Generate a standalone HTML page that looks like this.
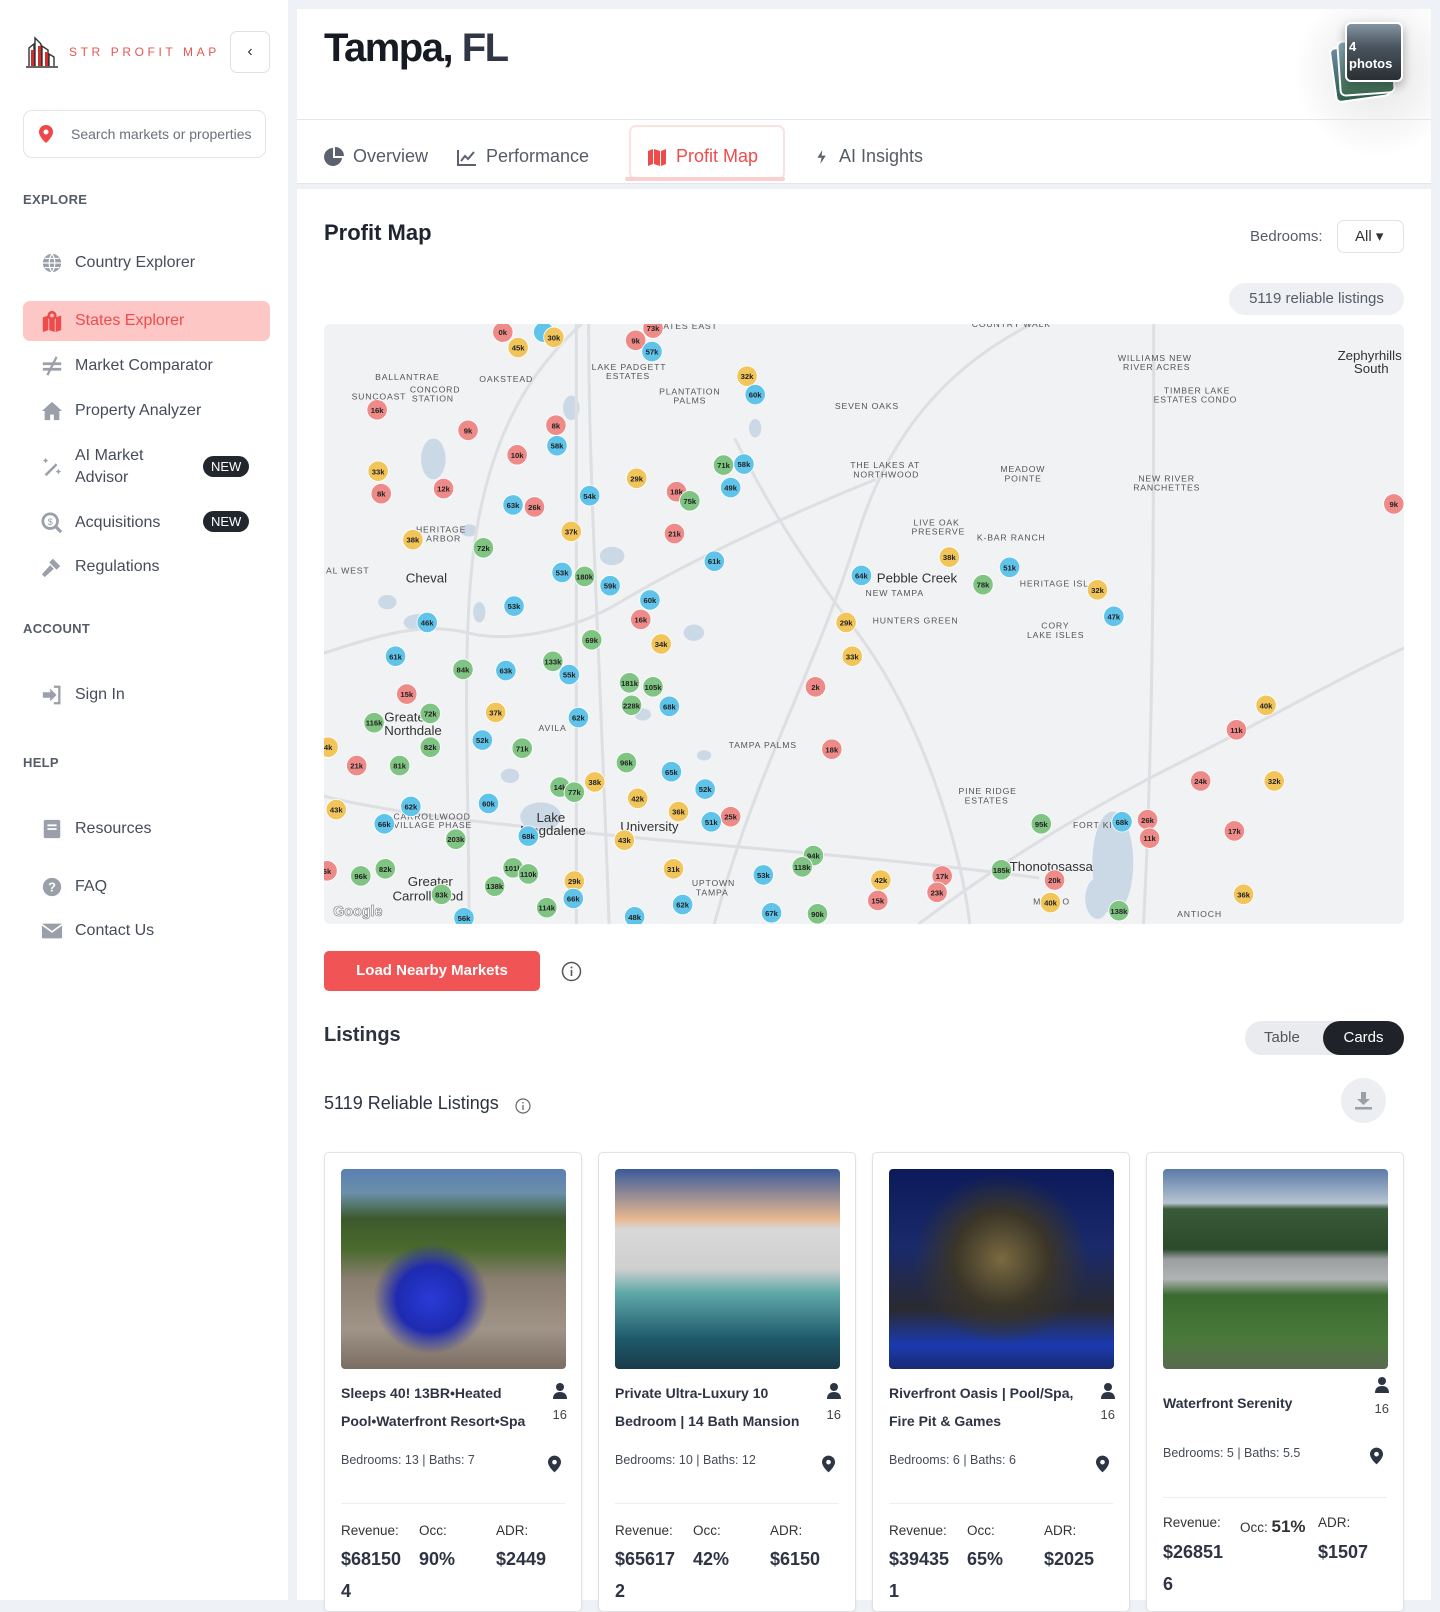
<!DOCTYPE html>
<html><head><meta charset="utf-8"><style>
*{box-sizing:border-box;margin:0;padding:0}
body{width:1440px;height:1600px;overflow:hidden;background:#eef1f5;font-family:"Liberation Sans",sans-serif;color:#2b3240;position:relative}
.abs{position:absolute}
#side{left:0;top:0;width:288px;height:1600px;background:#fff}
.nav{position:absolute;left:41px;font-size:16px;color:#454c5a;display:flex;align-items:center}
.nav svg{width:22px;height:22px;margin-right:12px;fill:#9aa0aa}
.sec{position:absolute;left:23px;font-size:13px;font-weight:bold;color:#555c68;letter-spacing:.3px}
.new{position:absolute;left:203px;background:#22262d;color:#fff;font-size:13px;border-radius:11px;padding:3px 8px}
#main{left:297px;top:9px;width:1134px;height:1591px;background:#fff}
.tab{position:absolute;top:137px;font-size:18px;color:#555c68;display:flex;align-items:center}
.tab svg{width:20px;height:20px;fill:#5b626e;margin-right:9px}
.card{position:absolute;top:1152px;width:258px;height:460px;border:1px solid #dfe2e6;border-radius:5px;background:#fff;box-shadow:0 1px 3px rgba(0,0,0,.06)}
.card .img{position:absolute;left:16px;top:16px;width:225px;height:200px;border-radius:4px;overflow:hidden}
.card .t{position:absolute;left:16px;top:226px;width:190px;font-size:14px;font-weight:bold;line-height:28px;color:#2d3443}
.card .p{position:absolute;right:14px;top:230px;font-size:13px;color:#444;text-align:center;line-height:20px}
.card .b{position:absolute;left:16px;top:300px;font-size:12.5px;color:#444b57}
.card .pin{position:absolute;right:20px;top:302px}
.card hr{position:absolute;left:16px;right:16px;top:350px;border:0;border-top:1px solid #eceef0}
.card .l{position:absolute;top:370px;font-size:13.5px;color:#333}
.card .v{position:absolute;top:396px;font-size:18px;font-weight:bold;color:#2d3443}
.m .mk text{font-size:7.5px;font-weight:bold;fill:#222;text-anchor:middle;font-family:"Liberation Sans",sans-serif}
.r{fill:#ee8b89}.y{fill:#f2c55b}.bl{fill:#5fc3ea}.g{fill:#80c483}
.m circle{stroke:#fff;stroke-width:.8}
.m .lb{font-size:8.5px;fill:#555;letter-spacing:.8px;font-family:"Liberation Sans",sans-serif}
.m .lbb{font-size:13px;fill:#333;font-family:"Liberation Sans",sans-serif}
</style></head><body>
<div id="side" class="abs">
 <svg class="abs" style="left:24px;top:34px" width="36" height="34" viewBox="0 0 36 34"><path d="M2 33h32" stroke="#333" stroke-width="1.5"/><path d="M5 32V14l5-4v22M11 32V4l6 6v22M18 32V12l6 4v16M25 32V20l5 3v9" fill="none" stroke="#333" stroke-width="1.4"/><rect x="7" y="16" width="3" height="16" fill="#d52b2b"/><rect x="14" y="12" width="3" height="20" fill="#d52b2b"/><rect x="21" y="18" width="3" height="14" fill="#d52b2b"/></svg>
 <div class="abs" style="left:69px;top:45px;font-size:12px;letter-spacing:3.6px;color:#e6574f">STR PROFIT MAP</div>
 <div class="abs" style="left:230px;top:31px;width:40px;height:42px;border:1px solid #dde0e4;border-radius:7px;text-align:center;line-height:40px;color:#333;font-size:16px">&#8249;</div>
 <div class="abs" style="left:23px;top:110px;width:243px;height:48px;border:1px solid #e2e5e9;border-radius:9px"></div>
 <svg class="abs" style="left:39px;top:125px" width="14" height="18" viewBox="0 0 14 18"><path d="M7 0a7 7 0 0 1 7 7c0 5-7 11-7 11S0 12 0 7a7 7 0 0 1 7-7z" fill="#f0474a"/><circle cx="7" cy="7" r="2.5" fill="#fff"/></svg>
 <div class="abs" style="left:71px;top:126px;font-size:14px;color:#6a707a;width:186px;overflow:hidden;white-space:nowrap">Search markets or properties</div>
 <div class="sec" style="top:192px">EXPLORE</div>
 <div class="nav" style="top:252px"><svg viewBox="0 0 24 24"><circle cx="12" cy="12" r="10"/><path d="M2 12h20M12 2c-4 5-4 15 0 20M12 2c4 5 4 15 0 20M4 7h16M4 17h16" stroke="#fff" stroke-width="1.3" fill="none"/></svg>Country Explorer</div>
 <div class="abs" style="left:23px;top:301px;width:247px;height:40px;background:#fdc7c6;border-radius:7px"></div>
 <div class="nav" style="top:310px;color:#ee4c4c"><svg viewBox="0 0 24 24" style="fill:#ee4c4c"><path d="M2 8l6-2v16l-6 2zM16 8l6-2v16l-6 2zM9 6l6 2v16l-6-2z"/><circle cx="12" cy="6" r="5" fill="#ee4c4c"/><circle cx="12" cy="6" r="2" fill="#fdc7c6"/></svg>States Explorer</div>
 <div class="nav" style="top:355px"><svg viewBox="0 0 24 24"><path d="M2 8h20v3H2zM2 14h20v3H2z"/><path d="M17 2L7 22" stroke="#9aa0aa" stroke-width="2.5"/></svg>Market Comparator</div>
 <div class="nav" style="top:400px"><svg viewBox="0 0 24 24"><path d="M12 2L1 12h3v10h6v-6h4v6h6V12h3z"/></svg>Property Analyzer</div>
 <div class="nav" style="top:445px;line-height:22px"><svg viewBox="0 0 24 24"><path d="M4 20l12-12 2 2L6 22z"/><path d="M5 2l1 2 2 1-2 1-1 2-1-2-2-1 2-1zM19 14l1 2 2 1-2 1-1 2-1-2-2-1 2-1z"/></svg><span>AI Market<br>Advisor</span></div>
 <div class="new" style="top:456px">NEW</div>
 <div class="nav" style="top:512px"><svg viewBox="0 0 24 24"><circle cx="10" cy="10" r="8" fill="none" stroke="#9aa0aa" stroke-width="3"/><path d="M15 15l7 7" stroke="#9aa0aa" stroke-width="3.5"/><text x="10" y="14" font-size="10" text-anchor="middle" fill="#9aa0aa">$</text></svg>Acquisitions</div>
 <div class="new" style="top:511px">NEW</div>
 <div class="nav" style="top:556px"><svg viewBox="0 0 24 24"><path d="M13 3l8 8-4 4-8-8zM10 10l4 4-10 9-3-3z"/></svg>Regulations</div>
 <div class="sec" style="top:621px">ACCOUNT</div>
 <div class="nav" style="top:684px"><svg viewBox="0 0 24 24"><path d="M2 9h8V5l7 7-7 7v-4H2z"/><path d="M14 3h6v18h-6" fill="none" stroke="#9aa0aa" stroke-width="2.5"/></svg>Sign In</div>
 <div class="sec" style="top:755px">HELP</div>
 <div class="nav" style="top:818px"><svg viewBox="0 0 24 24"><rect x="3" y="2" width="18" height="20" rx="2"/><path d="M7 8h10M7 12h10" stroke="#fff" stroke-width="2"/></svg>Resources</div>
 <div class="nav" style="top:876px"><svg viewBox="0 0 24 24"><circle cx="12" cy="12" r="10"/><text x="12" y="17" font-size="14" font-weight="bold" text-anchor="middle" fill="#fff">?</text></svg>FAQ</div>
 <div class="nav" style="top:920px"><svg viewBox="0 0 24 24"><rect x="1" y="4" width="22" height="16" rx="1"/><path d="M1 5l11 8 11-8" stroke="#fff" stroke-width="1.8" fill="none"/></svg>Contact Us</div>
</div>

<div id="main" class="abs">
 <div class="abs" style="left:27px;top:17px;font-size:40px;font-weight:bold;letter-spacing:-1.5px;color:#151a23">Tampa, <span style="color:#2f3744">FL</span></div>
 <div class="abs" style="left:1000px;top:0;width:134px;height:180px;background:radial-gradient(circle at 60% 35%,rgba(0,0,0,.1),rgba(0,0,0,0) 60%)"></div>
 <div class="abs" style="left:1035px;top:35px;width:56px;height:56px;border:2px solid #fff;border-radius:6px;background:linear-gradient(#6a8aa0,#2f5d4e);transform:rotate(-8deg)"></div>
 <div class="abs" style="left:1041px;top:30px;width:56px;height:56px;border:2px solid #fff;border-radius:6px;background:linear-gradient(#89a9b6,#3e6c52);transform:rotate(-4deg)"></div>
 <div class="abs" style="left:1048px;top:13px;width:58px;height:60px;border:2px solid #fff;border-radius:6px;background:linear-gradient(#8494a0,#4a5560 40%,#2a2f33);color:#fff;font-size:13px;font-weight:bold;padding:14px 0 0 2px;line-height:17px;box-shadow:0 4px 10px rgba(0,0,0,.3)">4<br>photos</div>
 <div class="abs" style="left:0;top:110px;width:1134px;border-top:1px solid #e3e6ea"></div>
 <div class="tab" style="left:27px"><svg viewBox="0 0 20 20"><path d="M9 1a9 9 0 1 0 9 10H9z"/><path d="M11 0v9h9a9 9 0 0 0-9-9z"/></svg>Overview</div>
 <div class="tab" style="left:160px"><svg viewBox="0 0 20 20"><path d="M1 3v15h18" fill="none" stroke="#5b626e" stroke-width="2"/><path d="M4 14l4-5 3 3 6-7" fill="none" stroke="#5b626e" stroke-width="2"/></svg>Performance</div>
 <div class="abs" style="left:332px;top:116px;width:156px;height:55px;border:2px solid #fde1e0;border-radius:7px"></div>
 <div class="abs" style="left:328px;top:168px;width:160px;height:4px;background:#fbcfcd;border-radius:2px"></div>
 <div class="tab" style="left:350px;color:#ef4b4b"><svg viewBox="0 0 20 20" style="fill:#ef4b4b"><path d="M1 4l5-2v15l-5 2zM14 4l5-2v15l-5 2zM7 2l6 2v15l-6-2z"/></svg>Profit Map</div>
 <div class="tab" style="left:519px"><svg viewBox="0 0 20 20" style="width:14px"><path d="M9 0L2 11h6l-2 9 8-12H8z"/></svg>AI Insights</div>
 <div class="abs" style="left:0;top:174px;width:1134px;height:6px;background:#eef1f5;border-top:1px solid #e3e6ea"></div>
 <div class="abs" style="left:27px;top:211px;font-size:22px;font-weight:bold;color:#1f2530">Profit Map</div>
 <div class="abs" style="left:953px;top:219px;font-size:15px;color:#555c68">Bedrooms:</div>
 <div class="abs" style="left:1040px;top:211px;width:67px;height:33px;border:1px solid #dfe2e6;border-radius:7px;font-size:15px;line-height:31px;padding-left:17px;color:#333">All &#9662;</div>
 <div class="abs" style="left:932px;top:274px;width:175px;height:32px;background:#eef0f3;border-radius:16px;font-size:15px;line-height:32px;text-align:center;color:#555c68">5119 reliable listings</div>
</div>

<svg class="abs m" style="left:324px;top:324px;border-radius:6px" width="1080" height="600" viewBox="318 318 1057 587" preserveAspectRatio="none">
<rect x="318" y="318" width="1057" height="587" fill="#f1f2f4"/>
<g fill="#cbd8e6">
<ellipse cx="425" cy="450" rx="12" ry="20"/><ellipse cx="410" cy="610" rx="14" ry="8"/><ellipse cx="600" cy="545" rx="12" ry="9"/><ellipse cx="560" cy="400" rx="8" ry="12"/><ellipse cx="680" cy="620" rx="10" ry="8"/><ellipse cx="470" cy="600" rx="6" ry="10"/><ellipse cx="530" cy="800" rx="20" ry="14"/><ellipse cx="1090" cy="845" rx="20" ry="50"/><ellipse cx="1075" cy="880" rx="12" ry="20"/><ellipse cx="500" cy="760" rx="9" ry="7"/><ellipse cx="630" cy="700" rx="8" ry="6"/><ellipse cx="740" cy="420" rx="6" ry="9"/><ellipse cx="460" cy="520" rx="8" ry="6"/><ellipse cx="380" cy="590" rx="9" ry="7"/><ellipse cx="690" cy="740" rx="7" ry="5"/><ellipse cx="560" cy="860" rx="7" ry="5"/>
</g>
<g fill="none" stroke="#dedfe2" stroke-width="3">
<path d="M565 318V905"/><path d="M577 318c0 150 10 300 20 587"/><path d="M318 640c60-20 100-30 140-20s100 0 150-30 150-80 250-120"/><path d="M460 905c0-150-10-300 10-400s60-150 100-187"/><path d="M700 905c40-150 100-250 140-380s120-180 170-207"/><path d="M720 430c30 60 60 110 120 190s100 200 110 285"/><path d="M318 780c80 20 200 30 300 40s250 20 400 40"/><path d="M900 905c80-60 160-110 260-160s150-80 215-110"/><path d="M1130 318c0 200 0 400-10 587"/>
</g>
<text class="lb" x="368" y="373">BALLANTRAE</text><text class="lb" x="470" y="375">OAKSTEAD</text><text class="lb" x="345" y="392">SUNCOAST</text><text class="lb" x="402" y="385">CONCORD</text><text class="lb" x="404" y="394">STATION</text><text class="lb" x="580" y="363">LAKE PADGETT</text><text class="lb" x="594" y="372">ESTATES</text><text class="lb" x="646" y="387">PLANTATION</text><text class="lb" x="660" y="396">PALMS</text><text class="lb" x="818" y="401">SEVEN OAKS</text><text class="lb" x="650" y="323">ATES EAST</text><text class="lb" x="952" y="321">COUNTRY WALK</text><text class="lb" x="1095" y="354">WILLIAMS NEW</text><text class="lb" x="1100" y="363">RIVER ACRES</text><text class="lb" x="1140" y="386">TIMBER LAKE</text><text class="lb" x="1130" y="395">ESTATES CONDO</text><text class="lbb" x="1310" y="353">Zephyrhills</text><text class="lbb" x="1326" y="366">South</text><text class="lb" x="833" y="459">THE LAKES AT</text><text class="lb" x="836" y="468">NORTHWOOD</text><text class="lb" x="980" y="463">MEADOW</text><text class="lb" x="984" y="472">POINTE</text><text class="lb" x="1115" y="472">NEW RIVER</text><text class="lb" x="1110" y="481">RANCHETTES</text><text class="lb" x="895" y="515">LIVE OAK</text><text class="lb" x="893" y="524">PRESERVE</text><text class="lb" x="957" y="530">K-BAR RANCH</text><text class="lb" x="999" y="575">HERITAGE ISL</text><text class="lbb" x="859" y="571">Pebble Creek</text><text class="lb" x="848" y="584">NEW TAMPA</text><text class="lb" x="855" y="611">HUNTERS GREEN</text><text class="lb" x="1020" y="616">CORY</text><text class="lb" x="1006" y="625">LAKE ISLES</text><text class="lbb" x="398" y="571">Cheval</text><text class="lb" x="320" y="562">AL WEST</text><text class="lb" x="408" y="522">HERITAGE</text><text class="lb" x="418" y="531">ARBOR</text><text class="lbb" x="377" y="707">Greater</text><text class="lbb" x="377" y="720">Northdale</text><text class="lb" x="528" y="716">AVILA</text><text class="lb" x="714" y="733">TAMPA PALMS</text><text class="lbb" x="526" y="805">Lake</text><text class="lbb" x="510" y="818">Magdalene</text><text class="lbb" x="608" y="814">University</text><text class="lb" x="939" y="778">PINE RIDGE</text><text class="lb" x="945" y="787">ESTATES</text><text class="lb" x="1051" y="811">FORT KI</text><text class="lbb" x="989" y="853">Thonotosassa</text><text class="lbb" x="400" y="868">Greater</text><text class="lbb" x="385" y="882">Carrollwood</text><text class="lb" x="678" y="868">UPTOWN</text><text class="lb" x="682" y="877">TAMPA</text><text class="lb" x="1153" y="898">ANTIOCH</text><text class="lb" x="1012" y="886">MANGO</text><text class="lb" x="386" y="803">CARROLLWOOD</text><text class="lb" x="386" y="811">VILLAGE PHASE</text>
<text x="327" y="897" style="font-size:14px;font-weight:bold;fill:#fff;stroke:#777;stroke-width:.6;font-family:'Liberation Sans',sans-serif">Google</text>
<g class="mk">
<circle class="r" cx="493" cy="326" r="10"/><text x="493" y="329">0k</text>
<circle class="bl" cx="533" cy="326" r="10"/>
<circle class="y" cx="508" cy="341" r="10"/><text x="508" y="344">45k</text>
<circle class="y" cx="543" cy="331" r="10"/><text x="543" y="334">30k</text>
<circle class="r" cx="640" cy="322" r="10"/><text x="640" y="325">73k</text>
<circle class="r" cx="623" cy="334" r="10"/><text x="623" y="337">9k</text>
<circle class="bl" cx="639" cy="345" r="10"/><text x="639" y="348">57k</text>
<circle class="y" cx="732" cy="369" r="10"/><text x="732" y="372">32k</text>
<circle class="bl" cx="740" cy="387" r="10"/><text x="740" y="390">60k</text>
<circle class="r" cx="370" cy="402" r="10"/><text x="370" y="405">16k</text>
<circle class="r" cx="459" cy="422" r="10"/><text x="459" y="425">9k</text>
<circle class="r" cx="545" cy="417" r="10"/><text x="545" y="420">8k</text>
<circle class="bl" cx="546" cy="437" r="10"/><text x="546" y="440">58k</text>
<circle class="r" cx="507" cy="446" r="10"/><text x="507" y="449">10k</text>
<circle class="y" cx="371" cy="462" r="10"/><text x="371" y="465">33k</text>
<circle class="r" cx="374" cy="484" r="10"/><text x="374" y="487">8k</text>
<circle class="r" cx="435" cy="479" r="10"/><text x="435" y="482">12k</text>
<circle class="y" cx="624" cy="469" r="10"/><text x="624" y="472">29k</text>
<circle class="g" cx="709" cy="456" r="10"/><text x="709" y="459">71k</text>
<circle class="bl" cx="729" cy="455" r="10"/><text x="729" y="458">58k</text>
<circle class="bl" cx="716" cy="478" r="10"/><text x="716" y="481">49k</text>
<circle class="r" cx="663" cy="482" r="10"/><text x="663" y="485">18k</text>
<circle class="g" cx="676" cy="491" r="10"/><text x="676" y="494">75k</text>
<circle class="bl" cx="503" cy="495" r="10"/><text x="503" y="498">63k</text>
<circle class="r" cx="524" cy="497" r="10"/><text x="524" y="500">26k</text>
<circle class="bl" cx="578" cy="486" r="10"/><text x="578" y="489">54k</text>
<circle class="y" cx="405" cy="529" r="10"/><text x="405" y="532">38k</text>
<circle class="g" cx="474" cy="537" r="10"/><text x="474" y="540">72k</text>
<circle class="y" cx="560" cy="521" r="10"/><text x="560" y="524">37k</text>
<circle class="r" cx="661" cy="523" r="10"/><text x="661" y="526">21k</text>
<circle class="bl" cx="700" cy="550" r="10"/><text x="700" y="553">61k</text>
<circle class="bl" cx="551" cy="561" r="10"/><text x="551" y="564">53k</text>
<circle class="g" cx="573" cy="565" r="10"/><text x="573" y="568">180k</text>
<circle class="bl" cx="598" cy="574" r="10"/><text x="598" y="577">59k</text>
<circle class="bl" cx="504" cy="594" r="10"/><text x="504" y="597">53k</text>
<circle class="bl" cx="637" cy="588" r="10"/><text x="637" y="591">60k</text>
<circle class="r" cx="628" cy="607" r="10"/><text x="628" y="610">16k</text>
<circle class="bl" cx="419" cy="610" r="10"/><text x="419" y="613">46k</text>
<circle class="g" cx="580" cy="627" r="10"/><text x="580" y="630">69k</text>
<circle class="y" cx="648" cy="631" r="10"/><text x="648" y="634">34k</text>
<circle class="bl" cx="388" cy="643" r="10"/><text x="388" y="646">61k</text>
<circle class="g" cx="454" cy="656" r="10"/><text x="454" y="659">84k</text>
<circle class="bl" cx="496" cy="657" r="10"/><text x="496" y="660">63k</text>
<circle class="g" cx="542" cy="648" r="10"/><text x="542" y="651">133k</text>
<circle class="bl" cx="558" cy="661" r="10"/><text x="558" y="664">55k</text>
<circle class="g" cx="617" cy="669" r="10"/><text x="617" y="672">181k</text>
<circle class="g" cx="640" cy="673" r="10"/><text x="640" y="676">105k</text>
<circle class="g" cx="619" cy="691" r="10"/><text x="619" y="694">228k</text>
<circle class="bl" cx="656" cy="692" r="10"/><text x="656" y="695">68k</text>
<circle class="r" cx="399" cy="680" r="10"/><text x="399" y="683">15k</text>
<circle class="y" cx="486" cy="698" r="10"/><text x="486" y="701">37k</text>
<circle class="g" cx="422" cy="699" r="10"/><text x="422" y="702">72k</text>
<circle class="g" cx="367" cy="708" r="10"/><text x="367" y="711">116k</text>
<circle class="bl" cx="567" cy="703" r="10"/><text x="567" y="706">62k</text>
<circle class="bl" cx="473" cy="725" r="10"/><text x="473" y="728">52k</text>
<circle class="g" cx="422" cy="732" r="10"/><text x="422" y="735">82k</text>
<circle class="g" cx="512" cy="733" r="10"/><text x="512" y="736">71k</text>
<circle class="y" cx="322" cy="732" r="10"/><text x="322" y="735">4k</text>
<circle class="r" cx="350" cy="750" r="10"/><text x="350" y="753">21k</text>
<circle class="g" cx="392" cy="750" r="10"/><text x="392" y="753">81k</text>
<circle class="g" cx="614" cy="747" r="10"/><text x="614" y="750">96k</text>
<circle class="bl" cx="658" cy="756" r="10"/><text x="658" y="759">65k</text>
<circle class="g" cx="549" cy="771" r="10"/><text x="549" y="774">14k</text>
<circle class="y" cx="583" cy="766" r="10"/><text x="583" y="769">38k</text>
<circle class="g" cx="563" cy="776" r="10"/><text x="563" y="779">77k</text>
<circle class="bl" cx="691" cy="773" r="10"/><text x="691" y="776">52k</text>
<circle class="y" cx="625" cy="782" r="10"/><text x="625" y="785">42k</text>
<circle class="y" cx="330" cy="793" r="10"/><text x="330" y="796">43k</text>
<circle class="bl" cx="403" cy="790" r="10"/><text x="403" y="793">62k</text>
<circle class="bl" cx="479" cy="787" r="10"/><text x="479" y="790">60k</text>
<circle class="y" cx="665" cy="795" r="10"/><text x="665" y="798">36k</text>
<circle class="r" cx="716" cy="800" r="10"/><text x="716" y="803">25k</text>
<circle class="bl" cx="697" cy="805" r="10"/><text x="697" y="808">51k</text>
<circle class="bl" cx="377" cy="807" r="10"/><text x="377" y="810">66k</text>
<circle class="g" cx="447" cy="822" r="10"/><text x="447" y="825">203k</text>
<circle class="bl" cx="518" cy="819" r="10"/><text x="518" y="822">68k</text>
<circle class="y" cx="612" cy="823" r="10"/><text x="612" y="826">43k</text>
<circle class="g" cx="797" cy="838" r="10"/><text x="797" y="841">94k</text>
<circle class="g" cx="786" cy="849" r="10"/><text x="786" y="852">118k</text>
<circle class="g" cx="503" cy="850" r="10"/><text x="503" y="853">101k</text>
<circle class="g" cx="518" cy="856" r="10"/><text x="518" y="859">110k</text>
<circle class="g" cx="378" cy="851" r="10"/><text x="378" y="854">82k</text>
<circle class="g" cx="354" cy="858" r="10"/><text x="354" y="861">96k</text>
<circle class="r" cx="321" cy="853" r="10"/><text x="321" y="856">6k</text>
<circle class="y" cx="660" cy="851" r="10"/><text x="660" y="854">31k</text>
<circle class="bl" cx="748" cy="857" r="10"/><text x="748" y="860">53k</text>
<circle class="y" cx="563" cy="863" r="10"/><text x="563" y="866">29k</text>
<circle class="g" cx="485" cy="868" r="10"/><text x="485" y="871">138k</text>
<circle class="g" cx="433" cy="876" r="10"/><text x="433" y="879">83k</text>
<circle class="bl" cx="562" cy="880" r="10"/><text x="562" y="883">66k</text>
<circle class="bl" cx="669" cy="886" r="10"/><text x="669" y="889">62k</text>
<circle class="g" cx="536" cy="889" r="10"/><text x="536" y="892">114k</text>
<circle class="bl" cx="756" cy="894" r="10"/><text x="756" y="897">67k</text>
<circle class="g" cx="801" cy="895" r="10"/><text x="801" y="898">90k</text>
<circle class="bl" cx="455" cy="899" r="10"/><text x="455" y="902">56k</text>
<circle class="bl" cx="622" cy="898" r="10"/><text x="622" y="901">48k</text>
<circle class="bl" cx="844" cy="564" r="10"/><text x="844" y="567">64k</text>
<circle class="y" cx="930" cy="546" r="10"/><text x="930" y="549">38k</text>
<circle class="g" cx="963" cy="573" r="10"/><text x="963" y="576">78k</text>
<circle class="bl" cx="989" cy="556" r="10"/><text x="989" y="559">51k</text>
<circle class="y" cx="1075" cy="578" r="10"/><text x="1075" y="581">32k</text>
<circle class="bl" cx="1091" cy="604" r="10"/><text x="1091" y="607">47k</text>
<circle class="y" cx="829" cy="610" r="10"/><text x="829" y="613">29k</text>
<circle class="y" cx="835" cy="643" r="10"/><text x="835" y="646">33k</text>
<circle class="r" cx="799" cy="673" r="10"/><text x="799" y="676">2k</text>
<circle class="r" cx="815" cy="734" r="10"/><text x="815" y="737">18k</text>
<circle class="y" cx="1240" cy="691" r="10"/><text x="1240" y="694">40k</text>
<circle class="r" cx="1211" cy="715" r="10"/><text x="1211" y="718">11k</text>
<circle class="r" cx="1176" cy="765" r="10"/><text x="1176" y="768">24k</text>
<circle class="y" cx="1248" cy="765" r="10"/><text x="1248" y="768">32k</text>
<circle class="g" cx="1020" cy="807" r="10"/><text x="1020" y="810">95k</text>
<circle class="bl" cx="1099" cy="805" r="10"/><text x="1099" y="808">68k</text>
<circle class="r" cx="1124" cy="803" r="10"/><text x="1124" y="806">26k</text>
<circle class="r" cx="1126" cy="821" r="10"/><text x="1126" y="824">11k</text>
<circle class="r" cx="1209" cy="814" r="10"/><text x="1209" y="817">17k</text>
<circle class="g" cx="981" cy="852" r="10"/><text x="981" y="855">185k</text>
<circle class="r" cx="1033" cy="862" r="10"/><text x="1033" y="865">20k</text>
<circle class="r" cx="923" cy="858" r="10"/><text x="923" y="861">17k</text>
<circle class="r" cx="918" cy="874" r="10"/><text x="918" y="877">23k</text>
<circle class="y" cx="863" cy="862" r="10"/><text x="863" y="865">42k</text>
<circle class="r" cx="860" cy="882" r="10"/><text x="860" y="885">15k</text>
<circle class="y" cx="1029" cy="884" r="10"/><text x="1029" y="887">40k</text>
<circle class="y" cx="1218" cy="876" r="10"/><text x="1218" y="879">36k</text>
<circle class="g" cx="1096" cy="892" r="10"/><text x="1096" y="895">138k</text>
<circle class="r" cx="1365" cy="494" r="10"/><text x="1365" y="497">9k</text>
</g>
</svg>

<div class="abs" style="left:324px;top:951px;width:216px;height:40px;background:#f05455;border-radius:5px;color:#fff;font-size:15px;font-weight:bold;line-height:40px;text-align:center">Load Nearby Markets</div>
<svg class="abs" style="left:561px;top:961px" width="21" height="21" viewBox="0 0 21 21"><circle cx="10.5" cy="10.5" r="9" fill="none" stroke="#555" stroke-width="1.5"/><path d="M10.5 9v6" stroke="#555" stroke-width="1.6"/><circle cx="10.5" cy="6.5" r="1" fill="#555"/></svg>
<div class="abs" style="left:324px;top:1024px;font-size:20px;font-weight:bold;color:#2b3240">Listings</div>
<div class="abs" style="left:1245px;top:1021px;width:159px;height:34px;background:#e9ebee;border-radius:17px"></div>
<div class="abs" style="left:1264px;top:1029px;font-size:15px;color:#555">Table</div>
<div class="abs" style="left:1323px;top:1021px;width:81px;height:34px;background:#1f2329;border-radius:17px;color:#fff;font-size:15px;line-height:34px;text-align:center">Cards</div>
<div class="abs" style="left:324px;top:1093px;font-size:18px;color:#2b3240">5119 Reliable Listings</div>
<svg class="abs" style="left:515px;top:1098px" width="16" height="16" viewBox="0 0 16 16"><circle cx="8" cy="8" r="7" fill="none" stroke="#666" stroke-width="1.2"/><path d="M8 7v5" stroke="#666" stroke-width="1.3"/><circle cx="8" cy="4.8" r=".8" fill="#666"/></svg>
<div class="abs" style="left:1341px;top:1078px;width:45px;height:45px;border-radius:50%;background:#eceef1"></div>
<svg class="abs" style="left:1354px;top:1091px" width="19" height="19" viewBox="0 0 19 19"><path d="M7 1h5v7h4l-6.5 6L3 8h4z" fill="#9aa0a8"/><rect x="1" y="16" width="17" height="2.5" fill="#9aa0a8"/></svg>

<div class="card" style="left:324px"><div class="img" style="background:radial-gradient(ellipse at 40% 65%,#2a3bd8 0,#1e2ab0 18%,rgba(0,0,0,0) 30%),linear-gradient(#5a7fb3 0,#6b8fa8 12%,#3b5a2c 25%,#4a6a2e 40%,#8a7e70 55%,#a09488 80%,#7a6e62)"></div>
 <div class="t">Sleeps 40! 13BR•Heated Pool•Waterfront Resort•Spa</div><div class="p"><svg width="14" height="16" viewBox="0 0 14 16"><circle cx="7" cy="4" r="4" fill="#2d3443"/><path d="M0 16c0-5 3-7 7-7s7 2 7 7z" fill="#2d3443"/></svg><br>16</div>
 <div class="b">Bedrooms: 13 | Baths: 7</div><div class="pin"><svg width="13" height="18" viewBox="0 0 14 18"><path d="M7 0a7 7 0 0 1 7 7c0 5-7 11-7 11S0 12 0 7a7 7 0 0 1 7-7z" fill="#2d3443"/><circle cx="7" cy="7" r="2.5" fill="#fff"/></svg></div><hr>
 <div class="l" style="left:16px">Revenue:</div><div class="l" style="left:94px">Occ:</div><div class="l" style="left:171px">ADR:</div>
 <div class="v" style="left:16px">$68150</div><div class="v" style="left:94px">90%</div><div class="v" style="left:171px">$2449</div><div class="v" style="left:16px;top:428px">4</div></div>
<div class="card" style="left:598px"><div class="img" style="background:linear-gradient(#3a5a9a 0,#e8b890 25%,#d8d8d8 30%,#cfcfcf 50%,#5fa8a8 62%,#1e5a6a 85%,#1a3a4a)"></div>
 <div class="t">Private Ultra-Luxury 10 Bedroom | 14 Bath Mansion</div><div class="p"><svg width="14" height="16" viewBox="0 0 14 16"><circle cx="7" cy="4" r="4" fill="#2d3443"/><path d="M0 16c0-5 3-7 7-7s7 2 7 7z" fill="#2d3443"/></svg><br>16</div>
 <div class="b">Bedrooms: 10 | Baths: 12</div><div class="pin"><svg width="13" height="18" viewBox="0 0 14 18"><path d="M7 0a7 7 0 0 1 7 7c0 5-7 11-7 11S0 12 0 7a7 7 0 0 1 7-7z" fill="#2d3443"/><circle cx="7" cy="7" r="2.5" fill="#fff"/></svg></div><hr>
 <div class="l" style="left:16px">Revenue:</div><div class="l" style="left:94px">Occ:</div><div class="l" style="left:171px">ADR:</div>
 <div class="v" style="left:16px">$65617</div><div class="v" style="left:94px">42%</div><div class="v" style="left:171px">$6150</div><div class="v" style="left:16px;top:428px">2</div></div>
<div class="card" style="left:872px"><div class="img" style="background:radial-gradient(ellipse at 50% 45%,#7a6a40 0,#3a3528 30%,rgba(0,0,0,0) 55%),linear-gradient(#0c1a5a 0,#1a2a6a 40%,#2a2a30 70%,#1a3ab0 88%,#1a2a70)"></div>
 <div class="t">Riverfront Oasis | Pool/Spa, Fire Pit &amp; Games</div><div class="p"><svg width="14" height="16" viewBox="0 0 14 16"><circle cx="7" cy="4" r="4" fill="#2d3443"/><path d="M0 16c0-5 3-7 7-7s7 2 7 7z" fill="#2d3443"/></svg><br>16</div>
 <div class="b">Bedrooms: 6 | Baths: 6</div><div class="pin"><svg width="13" height="18" viewBox="0 0 14 18"><path d="M7 0a7 7 0 0 1 7 7c0 5-7 11-7 11S0 12 0 7a7 7 0 0 1 7-7z" fill="#2d3443"/><circle cx="7" cy="7" r="2.5" fill="#fff"/></svg></div><hr>
 <div class="l" style="left:16px">Revenue:</div><div class="l" style="left:94px">Occ:</div><div class="l" style="left:171px">ADR:</div>
 <div class="v" style="left:16px">$39435</div><div class="v" style="left:94px">65%</div><div class="v" style="left:171px">$2025</div><div class="v" style="left:16px;top:428px">1</div></div>
<div class="card" style="left:1146px"><div class="img" style="background:linear-gradient(#5a7aa8 0,#b8c4d0 17%,#3a5a3a 20%,#2a4a2a 40%,#9a9ea0 45%,#b0b4b4 55%,#3a6a30 63%,#4a7a3a 85%,#5a6a50)"></div>
 <div class="t" style="top:236px">Waterfront Serenity</div><div class="p" style="top:224px"><svg width="14" height="16" viewBox="0 0 14 16"><circle cx="7" cy="4" r="4" fill="#2d3443"/><path d="M0 16c0-5 3-7 7-7s7 2 7 7z" fill="#2d3443"/></svg><br>16</div>
 <div class="b" style="top:293px">Bedrooms: 5 | Baths: 5.5</div><div class="pin" style="top:294px"><svg width="13" height="18" viewBox="0 0 14 18"><path d="M7 0a7 7 0 0 1 7 7c0 5-7 11-7 11S0 12 0 7a7 7 0 0 1 7-7z" fill="#2d3443"/><circle cx="7" cy="7" r="2.5" fill="#fff"/></svg></div><hr style="top:344px">
 <div class="l" style="left:16px;top:362px">Revenue:</div><div class="l" style="left:93px;top:364px">Occ: <b style="font-size:17px">51%</b></div><div class="l" style="left:171px;top:362px">ADR:</div>
 <div class="v" style="left:16px;top:389px">$26851</div><div class="v" style="left:171px;top:389px">$1507</div><div class="v" style="left:16px;top:421px">6</div></div>
</body></html>
